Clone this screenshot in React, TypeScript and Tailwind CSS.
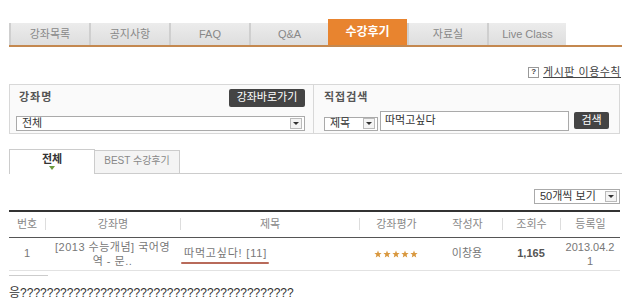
import React from "react";

const font = { fontFamily: '"Liberation Sans", "Noto Sans CJK KR", sans-serif' };

const tabs = [
  { label: "강좌목록", w: "w-[80px]" },
  { label: "공지사항", w: "w-[80px]" },
  { label: "FAQ", w: "w-[80px]" },
  { label: "Q&A", w: "w-[79px]" },
  { label: "수강후기", w: "w-[79px]", active: true },
  { label: "자료실", w: "w-[80px]" },
  { label: "Live Class", w: "w-[79px]" },
];

function Arrow() {
  return (
    <span className="flex h-[11px] w-[12px] items-center justify-center border border-[#bbb] bg-[#f4f4f4]">
      <span className="h-0 w-0 border-x-[3px] border-t-[3px] border-x-transparent border-t-[#333]" />
    </span>
  );
}

function Select({ label, className }: { label: string; className: string }) {
  return (
    <div
      className={`flex items-center justify-between border border-[#aaa] bg-white pl-[5px] pr-[2px] text-[11px] text-[#333] ${className}`}
    >
      <span>{label}</span>
      <Arrow />
    </div>
  );
}

function Star() {
  return (
    <svg width="8" height="8" viewBox="0 0 10 10">
      <path d="M5 0.5 6.2 3.6 9.5 3.8 7 5.9 7.8 9.3 5 7.4 2.2 9.3 3 5.9 0.5 3.8 3.8 3.6Z" fill="#d9983f" />
    </svg>
  );
}

export default function App() {
  return (
    <div className="h-[304px] w-[634px] overflow-hidden bg-white" style={font}>
      <div className="ml-[9px] w-[613px]">
        {/* Top tabs */}
        <div className="flex h-[47px] items-end border-b-2 border-[#c4884f]">
          {tabs.map((t) =>
            t.active ? (
              <div
                key={t.label}
                className={`${t.w} flex h-[26px] items-center justify-center bg-[#e8842f] text-[12px] font-bold text-white`}
              >
                {t.label}
              </div>
            ) : (
              <div
                key={t.label}
                className={`${t.w} flex h-[22px] items-center justify-center border-l-2 border-[#cfcfcf] bg-gradient-to-b from-[#ececec] to-[#dedede] text-[11px] text-[#888]`}
              >
                {t.label}
              </div>
            )
          )}
        </div>

        {/* Board rules link */}
        <div className="mt-[17px] flex items-center justify-end pr-[1px] text-[11px] text-[#444]">
          <span className="mr-[4px] flex h-[11px] w-[11px] items-center justify-center border border-[#999] text-[8px] font-bold leading-none">
            ?
          </span>
          <span className="tracking-[0.5px] underline">게시판 이용수칙</span>
        </div>

        {/* Search box */}
        <div className="mt-[3px] flex h-[50px] w-[611px] border border-[#d8d8d8] bg-[#fafafa]">
          <div className="flex w-[304px] flex-col border-r border-[#d8d8d8] pl-[6px] pr-[8px] pt-[4px]">
            <div className="flex h-[18px] items-center justify-between">
              <span className="ml-[3px] text-[11px] font-bold tracking-[1px] text-[#555]">강좌명</span>
              <span className="flex h-[18px] w-[76px] items-center justify-center rounded-[2px] bg-[#444] text-[11px] text-white">
                강좌바로가기
              </span>
            </div>
            <Select label="전체" className="mt-[9px] h-[15px] w-full" />
          </div>
          <div className="flex flex-1 flex-col pl-[10px] pr-[8px] pt-[4px]">
            <div className="flex h-[18px] items-center">
              <span className="text-[11px] font-bold tracking-[1px] text-[#555]">직접검색</span>
            </div>
            <div className="mt-[4px] flex items-end">
              <Select label="제목" className="h-[14px] w-[54px]" />
              <div className="ml-[2px] flex h-[20px] w-[189px] items-center border border-[#aaa] bg-white pl-[4px] text-[11px] text-[#333]">
                따먹고싶다
              </div>
              <span className="mb-[2px] ml-[5px] flex h-[17px] w-[35px] items-center justify-center rounded-[2px] bg-[#444] text-[11px] text-white">
                검색
              </span>
            </div>
          </div>
        </div>

        {/* Sub tabs */}
        <div className="mt-[15px] flex h-[25px] items-end">
          <div className="relative flex h-[25px] w-[86px] items-center justify-center border-x border-t border-[#ccc] bg-white text-[11px] font-bold text-[#333]">
            <span className="-mt-[4px]">전체</span>
            <span className="absolute bottom-[4px] left-1/2 h-0 w-0 -translate-x-1/2 border-x-[3px] border-t-[4px] border-x-transparent border-t-[#6a9a3a]" />
          </div>
          <div className="flex h-[24px] w-[85px] items-center justify-center border-y border-r border-[#ccc] bg-[#f4f4f4] pb-[2px] text-[10px] text-[#888]">
            BEST 수강후기
          </div>
          <div className="h-[25px] flex-1 border-b border-[#ccc]" />
        </div>

        {/* Page size */}
        <div className="mt-[15px] flex justify-end pr-[2px]">
          <Select label="50개씩 보기" className="h-[15px] w-[86px]" />
        </div>

        {/* Table */}
        <div className="mt-[6px] w-[611px] border-t-2 border-[#333] text-[11px]">
          <div className="flex h-[26px] items-center border-b border-[#555] text-[#888]">
            <div className="w-[36px] text-center">번호</div>
            <div className="h-[12px] w-px bg-[#ddd]" />
            <div className="w-[134px] text-center">강좌명</div>
            <div className="h-[12px] w-px bg-[#ddd]" />
            <div className="w-[178px] text-center">제목</div>
            <div className="h-[12px] w-px bg-[#ddd]" />
            <div className="w-[73px] text-center">강좌평가</div>
            <div className="w-[69px] text-center">작성자</div>
            <div className="h-[12px] w-px bg-[#ddd]" />
            <div className="w-[57px] text-center">조회수</div>
            <div className="h-[12px] w-px bg-[#ddd]" />
            <div className="flex-1 text-center">등록일</div>
          </div>
          <div className="flex h-[33px] items-center border-b border-[#e2e2e2] text-[#777]">
            <div className="w-[36px] text-center">1</div>
            <div className="w-[135px] text-center leading-[14px] tracking-[0.5px]">
              [2013 수능개념] 국어영
              <br />역 - 문..
            </div>
            <div className="w-[179px] pl-[4px]">
              <span className="relative tracking-[0.8px]">
                따먹고싶다! [11]
                <span className="absolute -bottom-[5px] -left-[3px] h-[2px] w-[88px] rounded-full bg-[#b86a5a]" />
              </span>
            </div>
            <div className="flex w-[73px] justify-center gap-[1px]">
              <Star />
              <Star />
              <Star />
              <Star />
              <Star />
            </div>
            <div className="w-[70px] text-center">이창용</div>
            <div className="w-[58px] text-center font-bold text-[#555]">1,165</div>
            <div className="flex-1 text-center leading-[14px]">
              2013.04.2
              <br />1
            </div>
          </div>
        </div>

        {/* Comment */}
        <div className="mt-[4px] h-px w-[39px] bg-[#ccc]" />
        <div className="mt-[8px] text-[12px] text-[#333]">
          응?????????????????????????????????????????
        </div>
      </div>
    </div>
  );
}
